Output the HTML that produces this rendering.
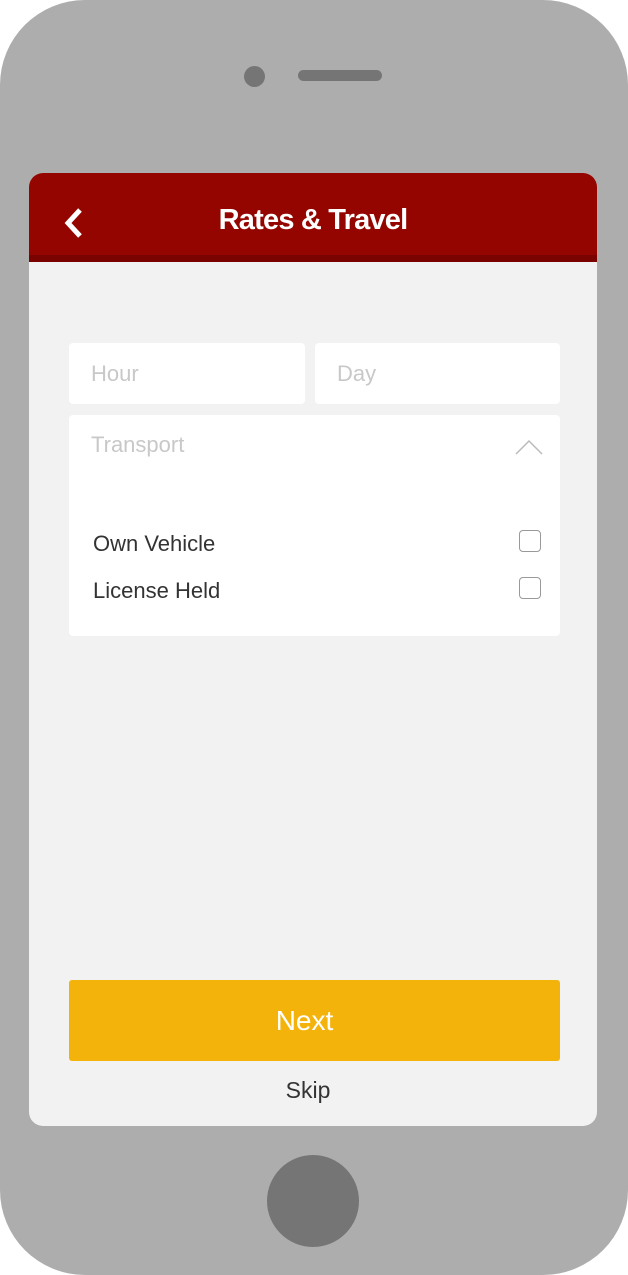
<!DOCTYPE html>
<html><head><style>
*{margin:0;padding:0;box-sizing:border-box}
body{width:628px;height:1275px;background:#fff;position:relative;overflow:hidden;font-family:"Liberation Sans",sans-serif}
.phone{position:absolute;left:0;top:0;width:628px;height:1275px;background:#adadad;border-radius:85px}
.cam{position:absolute;left:244px;top:66px;width:21px;height:21px;border-radius:50%;background:#757575}
.spk{position:absolute;left:298px;top:70px;width:84px;height:11px;border-radius:6px;background:#757575}
.home{position:absolute;left:267px;top:1155px;width:92px;height:92px;border-radius:50%;background:#757575}
.screen{position:absolute;left:29px;top:173px;width:568px;height:953px;background:#f2f2f2;border-radius:14px;overflow:hidden}
.hdr{position:absolute;left:0;top:0;width:568px;height:89px;background:#940500;border-bottom:7px solid #7a0300}
.hdr h1{position:absolute;left:0;right:0;top:31px;text-align:center;color:#fff;font-size:29px;font-weight:bold;letter-spacing:-0.8px}
.back{position:absolute;left:34px;top:34px}
.in{position:absolute;background:#fff;border-radius:4px;color:#c8c8c8;font-size:22px;padding-left:22px}
.lbl{position:absolute;left:64px;font-size:22px;color:#333}
.cb{position:absolute;left:490px;width:22px;height:22px;border:1.5px solid #999;border-radius:4px}
.next{position:absolute;left:40px;top:807px;width:491px;height:81px;background:#f4b30a;border-radius:3px;color:#fff;font-size:28px;text-align:center;line-height:81px;padding-right:20px}
.skip{position:absolute;left:0;right:10px;top:904px;text-align:center;font-size:23px;color:#333}
</style></head><body>
<div class="phone"><div class="cam"></div><div class="spk"></div><div class="home"></div>
<div class="screen">
<div class="hdr"><svg class="back" width="22" height="32" viewBox="0 0 22 32"><path d="M17 3 L5 16 L17 29" fill="none" stroke="#fff" stroke-width="5"/></svg><h1>Rates &amp; Travel</h1></div>
<div class="in" style="left:40px;top:170px;width:236px;height:61px;line-height:61px">Hour</div>
<div class="in" style="left:286px;top:170px;width:245px;height:61px;line-height:61px">Day</div>
<div class="in" style="left:40px;top:242px;width:491px;height:221px;line-height:60px">Transport
<svg style="position:absolute;left:446px;top:24px" width="28" height="16" viewBox="0 0 28 16"><path d="M1 15 L14 2 L27 15" fill="none" stroke="#bbb" stroke-width="1.5"/></svg>
</div>
<div class="lbl" style="top:358px">Own Vehicle</div><div class="cb" style="top:357px"></div>
<div class="lbl" style="top:405px">License Held</div><div class="cb" style="top:404px"></div>
<div class="next">Next</div>
<div class="skip">Skip</div>
</div></div>
</body></html>
